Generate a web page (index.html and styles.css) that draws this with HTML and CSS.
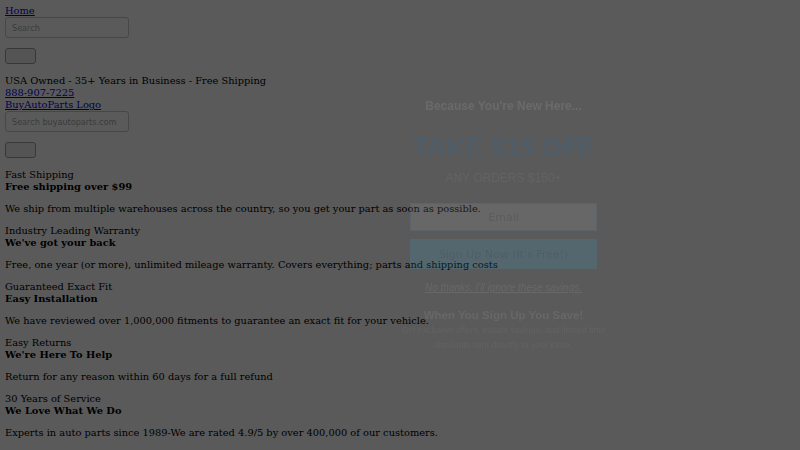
FILE: index.html
```html
<!DOCTYPE html>
<html lang="en">
<head>
<meta charset="utf-8">
<title>BuyAutoParts</title>
<link rel="stylesheet" href="styles.css">
</head>
<body>
<div class="page">
  <a class="line" href="#">Home</a>
  <form class="search-form">
    <input class="search" type="text" placeholder="Search">
    <button class="btn" type="button"></button>
  </form>
  <div class="line">USA Owned - 35+ Years in Business - Free Shipping</div>
  <a class="line" href="#">888-907-7225</a>
  <a class="line" href="#">BuyAutoParts Logo</a>
  <form class="search-form second">
    <input class="search" type="text" placeholder="Search buyautoparts.com">
    <button class="btn" type="button"></button>
  </form>
  <div class="features">
    <div class="feature">
      <div class="line">Fast Shipping</div>
      <div class="line strong">Free shipping over $99</div>
      <p class="line para">We ship from multiple warehouses across the country, so you get your part as soon as possible.</p>
    </div>
    <div class="feature">
      <div class="line">Industry Leading Warranty</div>
      <div class="line strong">We've got your back</div>
      <p class="line para">Free, one year (or more), unlimited mileage warranty. Covers everything; parts and shipping costs</p>
    </div>
    <div class="feature">
      <div class="line">Guaranteed Exact Fit</div>
      <div class="line strong">Easy Installation</div>
      <p class="line para">We have reviewed over 1,000,000 fitments to guarantee an exact fit for your vehicle.</p>
    </div>
    <div class="feature">
      <div class="line">Easy Returns</div>
      <div class="line strong">We're Here To Help</div>
      <p class="line para">Return for any reason within 60 days for a full refund</p>
    </div>
    <div class="feature">
      <div class="line">30 Years of Service</div>
      <div class="line strong">We Love What We Do</div>
      <p class="line para">Experts in auto parts since 1989-We are rated 4.9/5 by over 400,000 of our customers.</p>
    </div>
  </div>
</div>

<div class="overlay"></div>

<div class="modal">
  <div class="m-kicker">Because You're New Here...</div>
  <div class="m-title">TAKE $15 OFF</div>
  <div class="m-sub">ANY ORDERS $150+</div>
  <input class="m-email" type="text" placeholder="Email">
  <button class="m-btn" type="button">Sign Up Now (It's Free!)</button>
  <a class="m-no" href="#">No thanks, I'll ignore these savings.</a>
  <div class="m-head">When You Sign Up You Save!</div>
  <p class="m-text">Get exclusive offers, instant savings, and limited time discounts sent directly to your inbox.</p>
</div>
</body>
</html>
```

FILE: styles.css
```css
html, body {
  margin: 0;
  padding: 0;
  background: #ffffff;
}

body {
  font-family: "DejaVu Serif", serif;
  font-size: 9.85px;
  line-height: 12px;
  color: #000000;
}

.page {
  padding: 5px;
}

a {
  color: #0000ee;
  text-decoration: underline;
}

.line {
  display: block;
  line-height: 12px;
}

.search-form {
  display: flex;
  flex-direction: column;
  align-items: flex-start;
  gap: 10px;
  margin: 0 0 11px 0;
}

.search-form.second {
  margin-top: 0;
  margin-bottom: 11px;
}

.search {
  box-sizing: border-box;
  width: 124px;
  height: 21px;
  margin: 0;
  padding: 0 6px;
  border: 1px solid #c8c8c8;
  border-radius: 3px;
  background: #ffffff;
  font-family: "DejaVu Sans", sans-serif;
  font-size: 8.1px;
  color: #000;
}

.search::placeholder {
  color: #a9a9a9;
}

.btn {
  box-sizing: border-box;
  width: 31px;
  height: 16px;
  margin: 0;
  padding: 0;
  border: 1px solid #a0a0a0;
  border-radius: 3px;
  background: #efefef;
}

.features {
  display: flex;
  flex-direction: column;
}

.strong {
  font-weight: bold;
}

.para {
  margin: 10px 0;
}

.overlay {
  position: fixed;
  inset: 0;
  background: rgba(0, 0, 0, 0.647);
}

.modal {
  position: fixed;
  left: 395px;
  top: 99px;
  width: 217px;
  display: flex;
  flex-direction: column;
  align-items: center;
  text-align: center;
  opacity: 0.14;
  font-family: "Liberation Sans", Arial, sans-serif;
}

.m-kicker {
  font-size: 12px;
  font-weight: bold;
  line-height: 14px;
  color: #cccccc;
}

.m-title {
  margin-top: 19px;
  font-size: 26.5px;
  font-weight: bold;
  line-height: 30px;
  color: #0b6fbe;
}

.m-sub {
  margin-top: 9px;
  font-size: 12px;
  line-height: 14px;
  color: #9a9a9a;
}

.m-email {
  box-sizing: border-box;
  width: 187px;
  height: 28px;
  margin: 18px 0 0 0;
  border: 1px solid #68a1cc;
  background: #b7b7b7;
  text-align: center;
  font-family: "DejaVu Sans", sans-serif;
  font-size: 11px;
}

.m-email::placeholder {
  color: #686868;
}

.m-btn {
  box-sizing: border-box;
  width: 187px;
  height: 30px;
  margin-top: 8px;
  border: 0;
  background: #3db7e9;
  color: #136fa1;
  font-family: "DejaVu Sans", sans-serif;
  font-size: 11px;
}

.m-no {
  margin-top: 13px;
  font-size: 10px;
  line-height: 12px;
  font-style: italic;
  color: #bebebe;
  text-decoration: underline;
}

.m-head {
  margin-top: 14px;
  font-size: 11.5px;
  font-weight: bold;
  line-height: 14px;
  color: #b7b7b7;
}

.m-text {
  margin: 1px 0 0 0;
  font-size: 8.7px;
  line-height: 14.7px;
  color: #939393;
}
```
